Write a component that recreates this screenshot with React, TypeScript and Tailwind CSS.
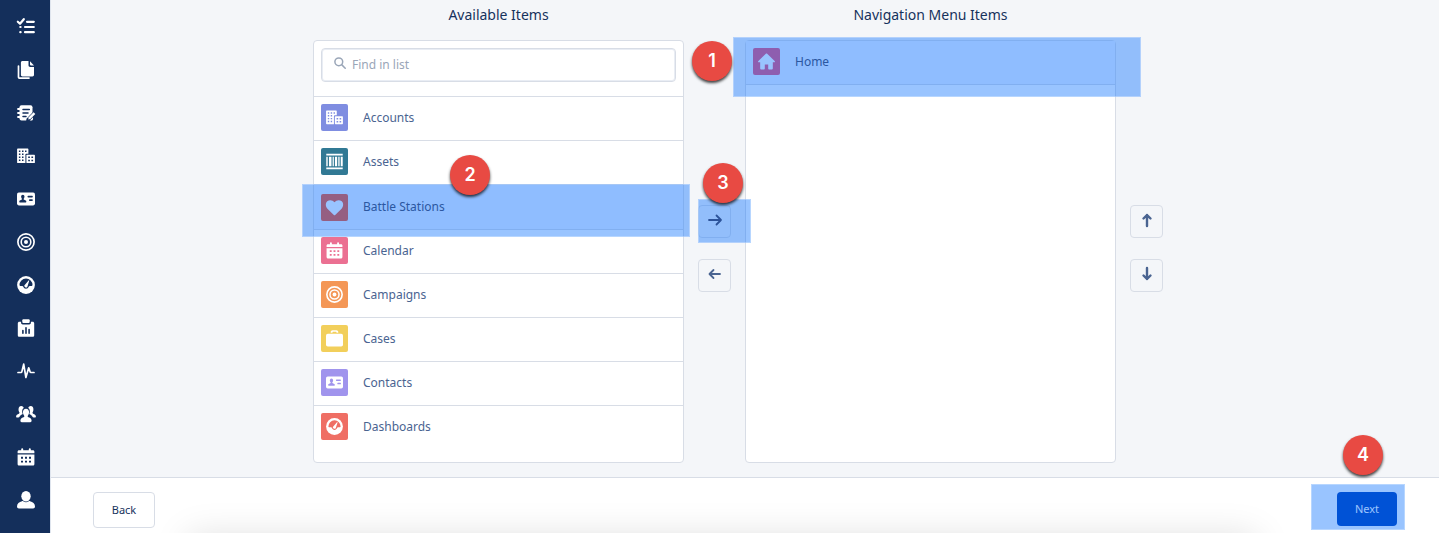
import React, { useState } from 'react';

type IconProps = { name: string; hole: string; className?: string };

function Icon({ name, hole, className = 'size-[18px]' }: IconProps) {
  return (
    <svg viewBox="0 0 18 18" fill="currentColor" className={`overflow-visible ${className}`} aria-hidden="true">
      {shapes(name, hole)}
    </svg>
  );
}

function shapes(name: string, hole: string) {
  switch (name) {
    case 'tasks':
      return (
        <g fill="none" stroke="currentColor" strokeWidth="2.2" strokeLinecap="round" strokeLinejoin="round">
          <path d="M.8 3.700 3 5.800 6.800 1.200" />
          <path d="M10 3.800h6.800M8 9h8.800M8 14.200h8.800" />
          <path d="M3.300 9h.3M3.300 14.200h.3" />
        </g>
      );
    case 'files':
      return (
        <>
          <path d="M5.500 0h6v4.300c0 1 .7 1.700 1.700 1.700H17v7.800c0 .9-.7 1.600-1.600 1.600H5.500c-.9 0-1.600-.7-1.600-1.600V1.600C3.900.7 4.600 0 5.500 0z" />
          <path d="M13 .3 17 4.400h-3.200c-.5 0-.8-.3-.8-.8z" />
          <path d="M1.500 5v11.200c0 .5.400.9.900.900h9.600" fill="none" stroke="currentColor" strokeWidth="1.700" strokeLinecap="round" />
        </>
      );
    case 'notes':
      return (
        <>
          <rect x="2.500" y="1.200" width="13" height="15.300" rx="2" />
          <path d="M1 5h3M1 9h3M1 13h3" stroke="currentColor" strokeWidth="1.800" strokeLinecap="round" />
          <path d="M6 5.400h6.300M6 8.900h5M6 12.400h3" stroke={hole} strokeWidth="1.500" strokeLinecap="round" />
          <path d="m9.500 14.700 7-7.200 2 1.500v6L15 18H9z" fill={hole} />
          <path d="m11.200 15.500.5-2.300 4.900-5 1.700 1.700-4.900 5z" />
          <path d="M13.500 15.800 16 13.300v1.700c0 .8-.7 1.500-1.500 1.500h-1.800z" />
        </>
      );
    case 'building':
      return (
        <>
          <path d="M.8 1.500h9.900c.4 0 .7.3.7.700v4.500H9.300c-.6 0-.9.3-.9.900v8.500H.8c-.4 0-.7-.3-.7-.7V2.200c0-.4.300-.7.700-.7z" />
          <rect x="9.400" y="7.800" width="8.500" height="8.300" rx=".7" />
          <path
            fill={hole}
            d="M1.900 3.400h1.500v1.500H1.900zM5 3.400h1.500v1.500H5zM8 3.400h1.500v1.500H8zM1.900 6.400h1.500v1.500H1.900zM5 6.400h1.500v1.500H5zM1.900 9.400h1.500v1.500H1.900zM5 9.400h1.500v1.500H5zM1.900 12.500h1.500V14H1.900zM5 12.500h1.500V14H5zM11.200 9.500h1.700v1.600h-1.700zM14.400 9.500h1.700v1.600h-1.700zM11.200 12.700h1.700v1.600h-1.700zM14.400 12.700h1.700v1.600h-1.700z"
          />
        </>
      );
    case 'contact':
      return (
        <>
          <rect x="0" y="2.600" width="18" height="12.800" rx="1.800" />
          <g fill={hole}>
            <ellipse cx="5.800" cy="6.800" rx="1.700" ry="2" />
            <path d="M4.900 8h1.800v1.600l2 .9c.4.2.6.5.6.9v.6c0 .3-.2.500-.5.500h-6c-.3 0-.5-.2-.5-.5v-.6c0-.4.200-.7.600-.9l2-.9z" />
            <rect x="10.500" y="5.700" width="5.300" height="1.700" rx=".7" />
            <rect x="12" y="9.200" width="3.800" height="1.700" rx=".7" />
          </g>
        </>
      );
    case 'target':
      return (
        <>
          <g fill="none" stroke="currentColor">
            <circle cx="9" cy="9" r="8.100" strokeWidth="1.700" />
            <circle cx="9" cy="9" r="4.800" strokeWidth="1.600" />
          </g>
          <circle cx="9" cy="9" r="2" />
        </>
      );
    case 'gauge':
      return (
        <>
          <circle cx="9" cy="9" r="8.900" />
          <path
            fill={hole}
            d="M9 2.500a6.500 6.500 0 0 0-6.500 6.600c0 .5.300.8.700.8h2c.6 0 .9.300 1.100.8.400 1.200 1.400 2 2.700 2s2.300-.8 2.700-2c.2-.5.500-.8 1.100-.8h2c.4 0 .7-.3.700-.8A6.500 6.500 0 0 0 9 2.500z"
          />
          <path d="m7.300 9.500 4.500-5.200.5.300-2 6.300a1.750 1.750 0 0 1-3-.8z" />
        </>
      );
    case 'report':
      return (
        <>
          <path d="M2.400 2.700h1.700v1c0 1 .8 1.700 1.700 1.700h6.400c.9 0 1.700-.7 1.700-1.700v-1h1.700c.9 0 1.600.7 1.600 1.600v11.900c0 .9-.7 1.600-1.600 1.600H2.400c-.9 0-1.600-.7-1.600-1.600V4.300c0-.9.700-1.600 1.600-1.600z" />
          <rect x="5.300" y=".3" width="7.400" height="3.800" rx="1" />
          <path d="M5.900 11.500v2.800M9 8.700v5.600M12.100 10.500v3.800" stroke={hole} strokeWidth="1.600" strokeLinecap="round" />
        </>
      );
    case 'pulse':
      return (
        <path
          d="M1 10.500h3c.5 0 .7-.2.800-.6L6.700 2.200l2.200 13.300 2.800-9.700 1.400 4c.1.500.4.700.9.700h3"
          fill="none"
          stroke="currentColor"
          strokeWidth="1.700"
          strokeLinecap="round"
          strokeLinejoin="round"
        />
      );
    case 'groups':
      return (
        <g transform="translate(-.9 -.2) scale(1.100)">
          <path d="M4.600 1.200c1.500 0 2.300 1 2.300 1.800C5.700 4 5.300 5.200 5.600 7c.1.800.4 1.300.4 1.300-.9.500-1.600.9-2.300 1.700-.5.700-.8 1.600-1.600 1.600H.8c-.5 0-.8-.4-.8-.9 0-1.400 1.300-2 2.500-2.600.7-.3.800-.8.300-1.500-.9-1.300-1-5.400 1.800-5.400zM13.400 1.200c-1.500 0-2.300 1-2.300 1.800 1.200 1 1.600 2.200 1.300 4-.1.800-.4 1.300-.4 1.300.9.500 1.600.9 2.300 1.700.5.700.8 1.600 1.600 1.600h1.300c.5 0 .8-.4.8-.9 0-1.400-1.300-2-2.500-2.600-.7-.3-.8-.8-.3-1.500.9-1.300 1-5.400-1.800-5.400z" />
          <path d="M9 3.500c1.800 0 2.800 1.400 2.800 3.200 0 1.100-.4 2-.9 2.700-.6.800-.5 1.500.4 1.900 1.700.7 2.800 1.500 2.800 3.300 0 .7-.5 1.200-1.200 1.200H5.100c-.7 0-1.200-.5-1.200-1.200 0-1.800 1.100-2.600 2.800-3.300.9-.4 1-1.100.4-1.900-.5-.7-.9-1.600-.9-2.700 0-1.800 1-3.200 2.800-3.200z" />
        </g>
      );
    case 'calendar':
      return (
        <>
          <path d="M2 2.300h14c.8 0 1.400.6 1.400 1.400v1.500H.6V3.700c0-.8.600-1.400 1.400-1.400z" />
          <path d="M5.200 1.300v2M12.800 1.300v2" stroke="currentColor" strokeWidth="2" strokeLinecap="round" />
          <path d="M.6 6.500h16.800v9.500c0 .9-.7 1.600-1.600 1.600H2.200c-.9 0-1.600-.7-1.600-1.600z" />
          <path
            fill={hole}
            d="M4 8.800h2v1.900H4zM8 8.800h2v1.900H8zM12 8.800h2v1.900h-2zM4 12.700h2v1.900H4zM8 12.700h2v1.900H8zM12 12.700h2v1.900h-2z"
          />
        </>
      );
    case 'user':
      return (
        <>
          <ellipse cx="9" cy="5.200" rx="4.700" ry="5.200" />
          <path d="M6.200 10.300c.8.700 1.800 1 2.800 1s2-.3 2.800-1c.4-.2.700-.3 1.200-.1 2.800.9 5 2.300 5 5.300 0 1.200-.8 2-1.900 2H1.900C.8 17.500 0 16.700 0 15.500c0-3 2.200-4.400 5-5.300.5-.2.800-.1 1.200.1z" />
        </>
      );
    case 'asset':
      return (
        <>
          <path d="M.3.800h17.400v1.900H.3zM.3 15.300h17.400v1.900H.3z" />
          <path d="M.3 4h1.500v10H.3zM3.200 4h2.600v10H3.200zM7 4h1.300v10H7zM9.500 4h2.300v10H9.500zM13 4h1.400v10H13zM15.600 4h2.100v10h-2.100z" />
        </>
      );
    case 'heart':
      return (
        <path d="M8.300 17 1.500 10.200C-.8 7.800-.6 4.200 1.300 2.500c2.200-2 5.600-1.700 7.700.9 2.100-2.600 5.500-2.900 7.700-.9 1.900 1.700 2.100 5.300-.2 7.700L9.700 17c-.4.400-1 .4-1.400 0z" />
      );
    case 'case':
      return (
        <>
          <path d="M5 3V2.200C5 1 5.900.2 7 .2h4c1.100 0 2 .8 2 2V3h-1.900v-.6c0-.3-.2-.5-.5-.5H7.400c-.3 0-.5.200-.5.500V3z" />
          <rect x="0" y="3.900" width="18" height="13.600" rx="1.900" />
        </>
      );
    default:
      return (
        <path d="M8.300.8.400 8.600c-.6.600-.3 1.200.4 1.200h1.500v6.600c0 .6.400 1 1 1h3.100c.4 0 .8-.4.8-.8v-4.400h3.600v4.400c0 .4.400.8.800.8h3.100c.6 0 1-.4 1-1V9.800h1.500c.7 0 1-.6.4-1.200L9.700.8c-.4-.4-1-.4-1.400 0z" />
      );
  }
}

const navigation = [
  ['tasks', 'Tasks'],
  ['files', 'Files'],
  ['notes', 'Notes'],
  ['building', 'Accounts'],
  ['contact', 'Contacts'],
  ['target', 'Campaigns'],
  ['gauge', 'Dashboards'],
  ['report', 'Reports'],
  ['pulse', 'Activity'],
  ['groups', 'Groups'],
  ['calendar', 'Calendar'],
  ['user', 'People'],
];

const items = [
  { label: 'Accounts', icon: 'building', hole: '#7f8de1', tile: 'bg-[#7f8de1]' },
  { label: 'Assets', icon: 'asset', hole: '#317994', tile: 'bg-[#317994]' },
  { label: 'Battle Stations', icon: 'heart', hole: '#f85730', tile: 'bg-[#f85730]' },
  { label: 'Calendar', icon: 'calendar', hole: '#eb7092', tile: 'bg-[#eb7092]' },
  { label: 'Campaigns', icon: 'target', hole: '#f49756', tile: 'bg-[#f49756]' },
  { label: 'Cases', icon: 'case', hole: '#f2cf5b', tile: 'bg-[#f2cf5b]' },
  { label: 'Contacts', icon: 'contact', hole: '#a094ed', tile: 'bg-[#a094ed]' },
  { label: 'Dashboards', icon: 'gauge', hole: '#ef6e64', tile: 'bg-[#ef6e64]' },
];

function Marker({ n, className }: { n: number; className: string }) {
  return (
    <span
      className={`pointer-events-none absolute z-20 flex size-10 items-center justify-center rounded-full bg-[#e84a43] font-['Inter',sans-serif] text-lg font-semibold text-white shadow-[0_2px_3px_rgba(0,0,0,0.75)] ${className}`}
    >
      {n}
    </span>
  );
}

function Highlight({ className }: { className: string }) {
  return <span className={`pointer-events-none absolute z-10 border border-white/30 bg-[#006cff]/40 ${className}`} />;
}

function Tile({ icon, hole, tile }: { icon: string; hole: string; tile: string }) {
  return (
    <span className={`flex size-[27px] shrink-0 items-center justify-center rounded-[2px] text-white ${tile}`}>
      <Icon name={icon} hole={hole} className="size-[17px]" />
    </span>
  );
}

function ArrowButton({ label, d, heavy, dark }: { label: string; d: string; heavy?: boolean; dark?: boolean }) {
  return (
    <button aria-label={label} className="flex size-[33px] items-center justify-center rounded border border-[#d8dde6]">
      <svg
        viewBox="0 0 16 16"
        className="mb-1 size-4"
        fill="none"
        stroke={dark ? '#4a4458' : '#4a6491'}
        strokeWidth={heavy ? 2.4 : 1.8}
        strokeLinecap="round"
        strokeLinejoin="round"
        aria-hidden="true"
      >
        <path d={d} />
      </svg>
    </button>
  );
}

export default function App() {
  const [query, setQuery] = useState('');
  const visible = items.filter((item) => item.label.toLowerCase().includes(query.toLowerCase()));

  return (
    <div className="flex h-screen overflow-hidden bg-[#f4f6f9] font-['Noto_Sans',sans-serif] text-[#16325c]">
      <nav aria-label="Main" className="flex w-[50px] shrink-0 flex-col bg-[#142f5b] pt-[5px] pl-px text-white">
        {navigation.map(([icon, label]) => (
          <a key={icon} href="#" aria-label={label} className="flex h-[43px] shrink-0 items-center justify-center">
            <Icon name={icon} hole="#142f5b" />
          </a>
        ))}
      </nav>

      <div className="flex min-w-0 flex-1 flex-col border-l border-[#dfe5ee]">
        <main className="flex flex-1 justify-center pr-[14px]">
          <div className="flex w-full max-w-[850px] gap-[14px]">
            <section className="flex min-w-0 flex-1 flex-col">
              <h2 className="flex h-10 items-start justify-center pt-1 text-sm leading-[22px]">Available Items</h2>
              <div className="h-[423px] rounded border border-[#d8dde6] bg-white">
                <div className="h-[55px] px-[7px] pt-[7px]">
                  <label className="flex h-[34px] items-center gap-[6px] rounded border border-[#d8dde6] pl-3 shadow-[inset_0_0_0_1px_#e9edf4]">
                    <svg viewBox="0 0 12 12" className="mb-1 size-3" fill="none" stroke="#9aa6b8" strokeWidth="1.500" strokeLinecap="round" aria-hidden="true">
                      <circle cx="4.800" cy="4.800" r="3.900" />
                      <path d="m7.900 7.900 3.300 3.300" />
                    </svg>
                    <input
                      aria-label="Find in list"
                      placeholder="Find in list"
                      value={query}
                      onChange={(e) => setQuery(e.target.value)}
                      className="min-w-0 flex-1 bg-transparent text-xs outline-none placeholder:text-[#9aa6b8]"
                    />
                  </label>
                </div>
                <ul>
                  {visible.map((item) => {
                    const selected = item.icon === 'heart';
                    return (
                      <li
                        key={item.label}
                        className={`relative flex items-center border-t border-[#d8dde6] pl-[7px] text-xs text-[#4a6491] ${selected ? 'h-[45px] bg-[#eef4ff]' : 'h-11 pb-0.5'}`}
                      >
                        <Tile {...item} />
                        <span className={`pl-[15px] ${selected ? 'text-[#4a4a62]' : ''}`}>{item.label}</span>
                        {selected && (
                          <>
                            <Highlight className="-top-px -right-[7px] -bottom-2 -left-3" />
                            <Marker n={2} className="-top-[30px] left-[136px]" />
                          </>
                        )}
                      </li>
                    );
                  })}
                </ul>
              </div>
            </section>

            <div className="flex flex-col gap-[21px] pt-[205px]">
              <div className="relative">
                <ArrowButton label="Add item" dark d="M2 8h12M9.500 3.500 14 8l-4.500 4.500" />
                <Highlight className="-top-[6px] -right-5 -bottom-[5px] left-0" />
                <Marker n={3} className="-top-[42px] left-[5px]" />
              </div>
              <ArrowButton label="Remove item" d="M13 8H3M6.500 4l-4 4 4 4" />
            </div>

            <section className="flex min-w-0 flex-1 flex-col">
              <h2 className="flex h-10 items-start justify-center pt-1 text-sm leading-[22px]">Navigation Menu Items</h2>
              <div className="h-[423px] rounded border border-[#d8dde6] bg-white">
                <ul>
                  <li className="relative flex h-11 items-center border-b border-[#d8dde6] bg-[#eef4ff] pb-0.5 pl-[7px] text-xs text-[#4a4a62]">
                    <Tile icon="home" hole="#ed557b" tile="bg-[#ed557b]" />
                    <span className="pl-[15px]">Home</span>
                    <Highlight className="-top-1 -right-[26px] -bottom-[13px] -left-[13px]" />
                    <Marker n={1} className="top-0 -left-[54px]" />
                  </li>
                </ul>
              </div>
            </section>

            <div className="flex flex-col gap-[21px] pt-[205px]">
              <ArrowButton label="Move up" heavy d="M8 14V3M4.500 6.500 8 3l3.500 3.500" />
              <ArrowButton label="Move down" heavy d="M8 2v11M4.500 9.500 8 13l3.500-3.500" />
            </div>
          </div>
        </main>

        <footer className="relative flex h-14 shrink-0 items-start justify-between border-t border-[#d8dde6] bg-white px-[42px] pt-[14px] text-[11px]">
          <div className="pointer-events-none absolute right-[150px] bottom-0 left-[105px] h-10 overflow-hidden">
            <div className="mx-8 mt-[43px] h-20 shadow-[0_0_36px_rgba(0,0,0,0.13)]" />
          </div>
          <button className="h-9 w-[62px] rounded border border-[#d8dde6] bg-white">Back</button>
          <div className="relative">
            <button className="h-[34px] w-[60px] rounded bg-[#0041bb] text-white">Next</button>
            <Highlight className="-top-2 -right-2 -bottom-1 -left-[26px]" />
            <Marker n={4} className="-top-[57px] left-[6px]" />
          </div>
        </footer>
      </div>
    </div>
  );
}
